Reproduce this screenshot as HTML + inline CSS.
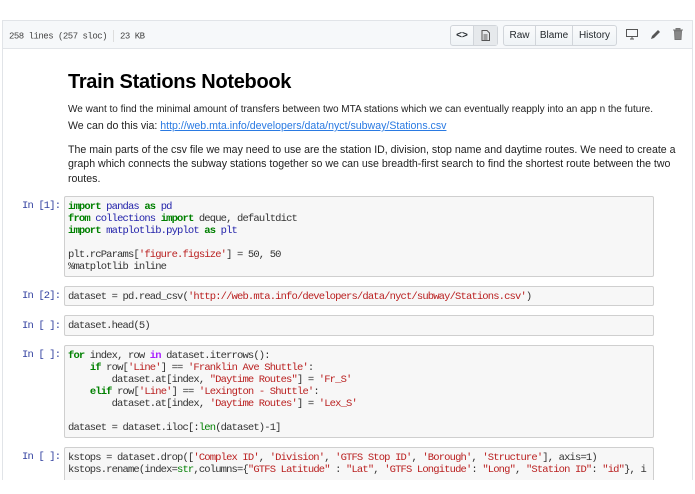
<!DOCTYPE html>
<html><head><meta charset="utf-8">
<style>
*{margin:0;padding:0;box-sizing:border-box}
body{width:695px;height:494px;background:#fff;position:relative;overflow:hidden;font-family:"Liberation Sans",Arial,sans-serif}
.frame{position:absolute;left:2px;top:20px;width:691px;height:470px;border:1px solid #e1e4e8;border-bottom:none}
.bar{position:absolute;left:0;top:0;width:689px;height:28px;background:#f6f8fa;border-bottom:1px solid #e1e4e8}
.meta{position:absolute;left:6px;top:9px;font:9px "Liberation Mono",monospace;color:#444;letter-spacing:-0.5px}
.meta .sep{display:inline-block;width:1px;height:12px;background:#ddd;vertical-align:middle;margin:0 6px}
.grp{position:absolute;top:4px;height:21px;border:1px solid #d1d5da;border-radius:3px;background:linear-gradient(#fafbfc,#eff3f6);display:flex;font-size:10px;color:#24292e}
.grp div{display:flex;align-items:center;justify-content:center;border-right:1px solid #d1d5da;height:100%}
.grp div:last-child{border-right:none}
.ic{position:absolute;top:8px}
h1{position:absolute;left:68px;top:71px;font-size:20px;font-weight:bold;color:#000;letter-spacing:-0.3px}
.l{position:absolute;left:68px;width:585px;font-size:10.6px;line-height:14px;color:#222;white-space:nowrap}
.j{text-align:justify;text-align-last:justify}
a{color:#2a7ae2}
.pr{position:absolute;left:22px;font:10.5px/12px "Liberation Mono",monospace;color:#303f9f;letter-spacing:-0.85px}
.cell{position:absolute;left:64px;width:590px;border:1px solid #cfcfcf;border-radius:2px;background:#f7f7f7;padding:4px 3px;font:10.5px/12px "Liberation Mono",monospace;letter-spacing:-0.85px;color:#333;white-space:pre;overflow:hidden}
.k{color:#008000;font-weight:bold}.m{color:#2222aa}.s{color:#ba2121}.b{color:#008000}.o{color:#aa22ff;font-weight:bold}
</style></head><body>
<div class="frame">
<div class="bar">
<div class="meta">258 lines (257 sloc)<span class="sep"></span>23 KB</div>
<div class="grp" style="left:447px;width:48px"><div style="width:23px;font-weight:bold;font-size:10px">&lt;&gt;</div><div style="width:23px;background:#e6e9ec"><svg width="9" height="11" viewBox="0 0 9 11"><path d="M1 .5h5l2.5 2.5v7.5h-7.5z" fill="none" stroke="#555"/><path d="M2.5 5h4M2.5 7h4M2.5 9h4" stroke="#555"/></svg></div></div>
<div class="grp" style="left:500px;width:114px"><div style="width:32px">Raw</div><div style="width:37px">Blame</div><div style="width:43px">History</div></div>
<svg class="ic" style="left:623px" width="12" height="11" viewBox="0 0 12 11"><rect x="0.5" y="0.5" width="11" height="7" fill="none" stroke="#555"/><path d="M4 10h4M6 8v2" stroke="#555"/></svg>
<svg class="ic" style="left:647px" width="11" height="11" viewBox="0 0 11 11"><path d="M1 10l1-3 6-6 2 2-6 6z" fill="#555"/></svg>
<svg class="ic" style="left:670px;top:7px" width="10" height="12" viewBox="0 0 10 12"><path d="M0 2h10M3 2V.5h4V2M1.5 3h7l-.5 8.5h-6z" fill="#888" stroke="#777"/></svg>
</div>
</div>
<h1>Train Stations Notebook</h1>
<div class="l j" style="top:103px;font-size:10px">We want to find the minimal amount of transfers between two MTA stations which we can eventually reapply into an app n the future.</div>
<div class="l" style="top:119px">We can do this via: <a href="#">http://web.mta.info/developers/data/nyct/subway/Stations.csv</a></div>
<div class="l j" style="top:143px">The main parts of the csv file we may need to use are the station ID, division, stop name and daytime routes. We need to create a</div>
<div class="l j" style="top:157px">graph which connects the subway stations together so we can use breadth-first search to find the shortest route between the two</div>
<div class="l" style="top:172px">routes.</div>

<div class="pr" style="top:200px">In [1]:</div>
<div class="cell" style="top:196px;height:81px"><span class="k">import</span> <span class="m">pandas</span> <span class="k">as</span> <span class="m">pd</span>
<span class="k">from</span> <span class="m">collections</span> <span class="k">import</span> deque, defaultdict
<span class="k">import</span> <span class="m">matplotlib.pyplot</span> <span class="k">as</span> <span class="m">plt</span>

plt.rcParams[<span class="s">'figure.figsize'</span>] = 50, 50
%matplotlib inline</div>

<div class="pr" style="top:290px">In [2]:</div>
<div class="cell" style="top:286px;height:20px">dataset = pd.read_csv(<span class="s">'http://web.mta.info/developers/data/nyct/subway/Stations.csv'</span>)</div>

<div class="pr" style="top:320px">In [ ]:</div>
<div class="cell" style="top:315px;height:21px">dataset.head(5)</div>

<div class="pr" style="top:349px">In [ ]:</div>
<div class="cell" style="top:345px;height:93px"><span class="k">for</span> index, row <span class="o">in</span> dataset.iterrows():
    <span class="k">if</span> row[<span class="s">'Line'</span>] == <span class="s">'Franklin Ave Shuttle'</span>:
        dataset.at[index, <span class="s">"Daytime Routes"</span>] = <span class="s">'Fr_S'</span>
    <span class="k">elif</span> row[<span class="s">'Line'</span>] == <span class="s">'Lexington - Shuttle'</span>:
        dataset.at[index, <span class="s">'Daytime Routes'</span>] = <span class="s">'Lex_S'</span>

dataset = dataset.iloc[:<span class="b">len</span>(dataset)-1]</div>

<div class="pr" style="top:451px">In [ ]:</div>
<div class="cell" style="top:447px;height:40px;border-bottom:none">kstops = dataset.drop([<span class="s">'Complex ID'</span>, <span class="s">'Division'</span>, <span class="s">'GTFS Stop ID'</span>, <span class="s">'Borough'</span>, <span class="s">'Structure'</span>], axis=1)
kstops.rename(index=<span class="b">str</span>,columns={<span class="s">"GTFS Latitude"</span> : <span class="s">"Lat"</span>, <span class="s">'GTFS Longitude'</span>: <span class="s">"Long"</span>, <span class="s">"Station ID"</span>: <span class="s">"id"</span>}, i</div>
<div style="position:absolute;left:0;top:480px;width:695px;height:14px;background:#fff"></div>
</body></html>
